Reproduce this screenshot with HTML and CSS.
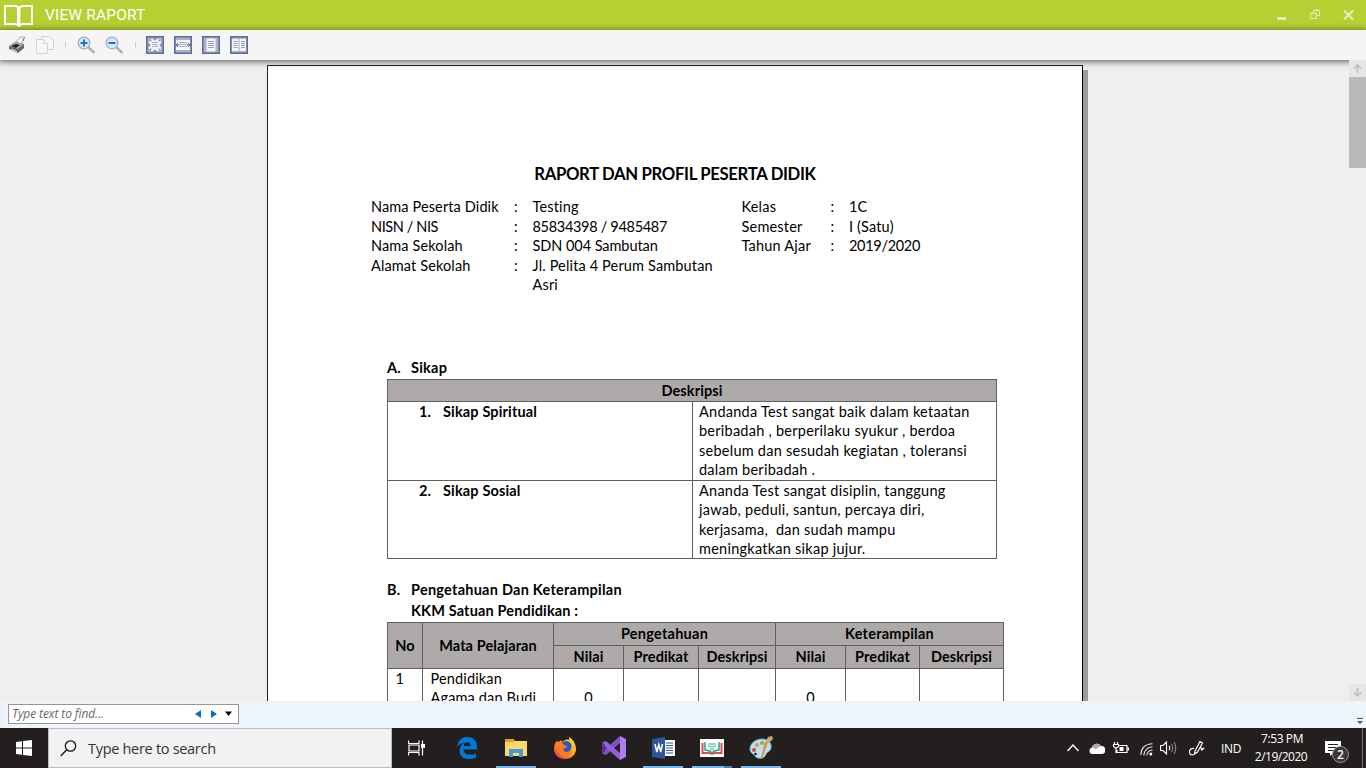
FILE: index.html
```html
<!DOCTYPE html>
<html lang="id">
<head>
<meta charset="utf-8">
<title>View Raport</title>
<link rel="stylesheet" href="styles.css">
</head>
<body>
<header class="titlebar">
  <svg class="book" width="30" height="24" viewBox="0 0 30 24" fill="none" stroke="#fff" stroke-width="2"><path d="M1 2H11Q13 2 15 4Q17 2 19 2H28V20H19Q17 20 15 22Q13 20 11 20H1Z"/><path d="M14.7 4V21" stroke-width="3.4"/></svg>
  <h1>VIEW RAPORT</h1>
  <div class="winbtns">
    <svg width="11" height="12" viewBox="0 0 11 12"><path d="M1 8h9v3H1z" fill="#e3edb4"/></svg>
    <svg width="11" height="12" viewBox="0 0 11 12" fill="none" stroke="#e3edb4"><path d="M.5 4.500h6v5h-6zM.5 4h6M3.500 3V1.500h6v5H7M3.500 1h6"/></svg>
    <svg width="11" height="12" viewBox="0 0 11 12" stroke="#e3edb4" stroke-width="2.400"><path d="M1 1.500l9 9M10 1.500l-9 9"/></svg>
  </div>
</header>

<nav class="toolbar">
  <svg width="18" height="18" viewBox="0 0 18 18"><path d="M8 6L12 1l5 0-4 7z" fill="#f8f8f8" stroke="#999" stroke-width=".8"/><path d="M1 10L7 6l9 2v4l-6 5-9-4z" fill="#666"/><path d="M1 10L7 6l9 2-6 5z" fill="#aaa"/><path d="M3 10l5-2 4 1-4 3z" fill="#222"/><path d="M3 13l6 2.500" stroke="#eee"/><path d="M15 5l1-3" stroke="#777"/></svg>
  <svg class="copy" width="20" height="18" viewBox="0 0 20 18" fill="#f7f7f7" stroke="#d2d2d2"><path d="M6.500.5h8l4 4v9h-12z"/><path d="M1.500 3.500h7l4 4v10h-11z"/><path d="M8.500 3.500v4h4"/></svg>
  <i class="sep sep-a"></i>
  <svg class="zoom-in" width="19" height="19" viewBox="0 0 19 19"><path d="M11 11l6.500 6" stroke="#b0b0b0" stroke-width="2.600"/><circle cx="7" cy="7" r="5.800" fill="#d6eafc" stroke="#9badc2" stroke-width="1.300"/><path d="M3.500 7h7M7 3.500v7" stroke="#1f73d2" stroke-width="2"/></svg>
  <svg class="zoom-out" width="19" height="19" viewBox="0 0 19 19"><path d="M11 11l6.500 6" stroke="#b0b0b0" stroke-width="2.600"/><circle cx="7" cy="7" r="5.800" fill="#d6eafc" stroke="#9badc2" stroke-width="1.300"/><path d="M3.500 7h7" stroke="#1f73d2" stroke-width="2"/></svg>
  <i class="sep sep-b"></i>
  <svg class="fit" width="18" height="18" viewBox="0 0 18 18"><path d="M.75.75h16.500v16.500H.75z" fill="#a9b1c4" stroke="#5a6c97" stroke-width="1.500"/><path d="M5 3h8v12H5z" fill="#f5f5f7"/><path d="M3 5h12v8H3z" fill="#f5f5f7"/><path d="M6 6.500h6M6 8.500h6M6 10.500h6" stroke="#a9b1c4"/><path d="M9 2v2.500M9 13.500v2.500M2 9h2.500M13.500 9H16M4 4l1.500 1.500M14 4l-1.500 1.500M4 14l1.500-1.500M14 14l-1.500-1.500M7.500 3.500L9 2l1.500 1.500M7.500 14.500L9 16l1.500-1.500M3.500 7.500L2 9l1.500 1.500M14.500 7.500L16 9l-1.500 1.500" fill="none" stroke="#6476a0"/></svg>
  <svg class="fit" width="18" height="18" viewBox="0 0 18 18"><path d="M.75.75h16.500v16.500H.75z" fill="#a9b1c4" stroke="#5a6c97" stroke-width="1.500"/><path d="M2 4h14v10H2z" fill="#f5f5f7"/><path d="M5 6.500h8M5 8.500h8M5 10.500h8" stroke="#a9b1c4"/><path d="M1.500 9H5M13 9h3.500M4 7L2 9l2 2M14 7l2 2-2 2" fill="none" stroke="#526695"/></svg>
  <svg class="fit" width="18" height="18" viewBox="0 0 18 18"><path d="M.75.75h16.500v16.500H.75z" fill="#a9b1c4" stroke="#5a6c97" stroke-width="1.500"/><path d="M4.500 2.500h9v13h-9z" fill="#f5f5f7"/><path d="M6 5.500h6M6 7.500h6M6 9.500h6M6 11.500h6" stroke="#9aa4ba"/></svg>
  <svg class="fit" width="18" height="18" viewBox="0 0 18 18"><path d="M.75.75h16.500v16.500H.75z" fill="#a9b1c4" stroke="#5a6c97" stroke-width="1.500"/><path d="M2 3h6.500v12H2zM9.500 3H16v12H9.500z" fill="#f5f5f7"/><path d="M3.500 5.500h4M3.500 7.500h4M3.500 9.500h4M3.500 11.500h4M11 5.500h4M11 7.500h4M11 9.500h4M11 11.500h4" stroke="#9aa4ba"/></svg>
</nav>

<main class="viewer">
  <article class="page">
    <h2>RAPORT DAN PROFIL PESERTA DIDIK</h2>
    <section class="identity">
      <dl>
        <dt>Nama Peserta Didik</dt><dd>:</dd><dd>Testing</dd>
        <dt class="caps">NISN / NIS</dt><dd>:</dd><dd class="num">85834398 / 9485487</dd>
        <dt>Nama Sekolah</dt><dd>:</dd><dd class="mixed">SDN 004 Sambutan</dd>
        <dt>Alamat Sekolah</dt><dd>:</dd><dd>Jl. Pelita 4 Perum Sambutan<br>Asri</dd>
      </dl>
      <dl class="right">
        <dt>Kelas</dt><dd>:</dd><dd>1C</dd>
        <dt>Semester</dt><dd>:</dd><dd>I (Satu)</dd>
        <dt>Tahun Ajar</dt><dd>:</dd><dd class="num">2019/2020</dd>
      </dl>
    </section>
    <h3 class="sec-a"><span>A.</span>Sikap</h3>
    <div class="attitude">
      <div class="head wide">Deskripsi</div>
      <div class="aspect"><span>1.</span>Sikap Spiritual</div>
      <div class="desc">Andanda Test sangat baik dalam ketaatan<br>beribadah , berperilaku syukur , berdoa<br>sebelum dan sesudah kegiatan , toleransi<br>dalam beribadah .</div>
      <div class="aspect"><span>2.</span>Sikap Sosial</div>
      <div class="desc">Ananda Test sangat disiplin, tanggung<br>jawab, peduli, santun, percaya diri,<br>kerjasama,&nbsp; dan sudah mampu<br>meningkatkan sikap jujur.</div>
    </div>
    <h3 class="sec-b"><span>B.</span>Pengetahuan Dan Keterampilan</h3>
    <h3 class="kkm">KKM Satuan Pendidikan :</h3>
    <div class="scores">
      <div class="head tall">No</div><div class="head tall">Mata Pelajaran</div>
      <div class="head group">Pengetahuan</div><div class="head group">Keterampilan</div>
      <div class="head">Nilai</div><div class="head">Predikat</div><div class="head">Deskripsi</div>
      <div class="head">Nilai</div><div class="head">Predikat</div><div class="head">Deskripsi</div>
      <div class="cell">1</div><div class="cell">Pendidikan<br>Agama dan Budi</div>
      <div class="cell mark">0</div><div class="cell"></div><div class="cell"></div>
      <div class="cell mark">0</div><div class="cell"></div><div class="cell"></div>
    </div>
  </article>
  <div class="scrollbar">
    <div class="arrow"><svg width="9" height="9" viewBox="0 0 9 9" fill="none" stroke="#bbb" stroke-width="1.600"><path d="M4.500 9V1.500M1 4.500l3.500-3.500L8 4.500"/></svg></div>
    <div class="thumb"></div>
    <div class="arrow down"><svg width="9" height="9" viewBox="0 0 9 9" fill="none" stroke="#bbb" stroke-width="1.600"><path d="M4.500 0v7.500M1 4.500L4.500 8 8 4.500"/></svg></div>
  </div>
</main>

<div class="findbar">
  <div class="findbox"><span>Type text to find...</span>
    <svg width="38" height="10" viewBox="0 0 38 10"><path d="M6 1v8L0 5z" fill="#0b6cc4"/><path d="M16 1v8l6-4z" fill="#0b6cc4"/><path d="M30 2.500h7L33.500 7z"/></svg>
  </div>
  <svg class="more" width="6" height="7" viewBox="0 0 6 7" fill="#555"><path d="M0 0h6v1H0zM0 3h6L3 6z"/></svg>
</div>

<footer class="taskbar">
  <div class="start"><svg width="16" height="16" viewBox="0 0 16 16" fill="#fff"><path d="M0 2l6-.8v6.300H0zM7 1l9-1v7.500H7zM0 8.500h6v6.300L0 14zM7 8.500h9V16l-9-1z"/></svg></div>
  <div class="search"><svg width="17" height="17" viewBox="0 0 17 17" fill="none" stroke="#111" stroke-width="1.300"><circle cx="10.500" cy="6" r="5.200"/><path d="M6.800 9.800L.7 16"/></svg><span>Type here to search</span></div>
  <div class="apps">
    <div class="app taskview"><svg width="17" height="16" viewBox="0 0 17 16" fill="none" stroke="#fff" stroke-width="1.200"><path d="M.5.500V3.500H11V.5M.5 15.500V12.500H11V15.500M1 5h10v6H1zM14.500.500V15.500"/><path d="M13 4h4v4h-4z" fill="#fff" stroke="none"/></svg></div>
    <div class="app"><svg width="20" height="22" viewBox="0 0 20 22"><path d="M0 10C1 3 5 0 10.500 0C17 0 20 4.500 20 10v2.500H6.500c.3 4 3.500 5.300 6.500 5.300 2.500 0 4.500-.7 6-1.600v4.300C17 21.500 14.500 22 12 22 6 22 2.500 18.500 2.500 13.500 2.500 10 4.500 7.500 7.500 6 4.500 6 1.500 7.500 0 10zM6.700 9h7c0-2.300-1.200-3.700-3.500-3.700S7 7 6.700 9z" fill="#0078d7"/></svg></div>
    <div class="app open"><svg width="22" height="18" viewBox="0 0 22 18"><path d="M0 0h8l2 2h12v15H0z" fill="#ffd665"/><path d="M0 0h9v3H0z" fill="#e0a11b"/><path d="M4 18v-8h14v8h-4v-4H8v4z" fill="#3f9bdc"/></svg></div>
    <div class="app"><svg width="22" height="22" viewBox="0 0 22 22"><defs><linearGradient id="fx" x1="1" y1="0" x2="0" y2="1"><stop offset="0" stop-color="#ffe94a"/><stop offset=".5" stop-color="#ff9a1a"/><stop offset="1" stop-color="#f0216b"/></linearGradient></defs><path d="M3 4l2 1 2-2 1 2c2-2 5-3 7-2V0c5 3 7 8 7 12 0 6-5 10-11 10S0 18 0 12C0 8 1 6 3 4z" fill="url(#fx)"/><circle cx="12" cy="9.500" r="5.500" fill="#2856c8"/><path d="M3 6c4-2 6 0 7 2l3 1c0 2-3 2-4 3 1 4 6 4 9 1-1 5-5 7-8 6-6-1-9-7-7-13z" fill="#ff7c1e"/></svg></div>
    <div class="app"><svg width="24" height="24" viewBox="0 0 24 24"><path d="M18 0l6 3v18l-6 3V0z" fill="#b07cf0"/><path d="M18 0v7L4 19 0 17.500V16z" fill="#8250c8"/><path d="M0 8V6.500L4 5l14 12v7z" fill="#9460da"/><path d="M0 6.500v11l3-2V8.500z" fill="#60309c"/></svg></div>
    <div class="app open"><svg width="23" height="22" viewBox="0 0 23 22"><path d="M12 3h11v16H12z" fill="#fff"/><path d="M14 6h7M14 8.500h7M14 11h7M14 13.500h7M14 16h7" stroke="#2b5797"/><path d="M0 2L13 0v22L0 20z" fill="#2b579a"/><path d="M3 7l1.800 8 2-7.500L8.700 15 10.500 7" fill="none" stroke="#fff" stroke-width="1.500"/></svg></div>
    <div class="app open double"><svg width="24" height="18" viewBox="0 0 24 18" fill="none"><path d="M0 0h24v18H0z" fill="#fff"/><path d="M2.500 4v10h6q2 0 3.500 1 1.500-1 3.500-1h6V4" stroke="#e04a50" stroke-width="2"/><path d="M5 3v8q4 0 7 3 3-3 7-3V3" stroke="#25a878" stroke-width="1.500"/><path d="M8 5h8M8 7.500h8M10 10h4" stroke="#72c8a8" stroke-width="1.300"/></svg></div>
    <div class="app open"><svg width="24" height="24" viewBox="0 0 24 24"><path d="M1 13C1 7 7 3 13 3c6 0 10 4 9 9-1 4-4 4-5 6-1 3-3 5-8 4-3-.5-3-3-5-4-2-1-3-3-3-5z" fill="#b9e0f0" stroke="#70adc9"/><circle cx="5" cy="14" r="2" fill="#d94738"/><circle cx="8" cy="9" r="2" fill="#f0903a"/><circle cx="13" cy="7" r="2" fill="#7dbd3a"/><circle cx="6.500" cy="18" r="1.300" fill="#231f1e"/><path d="M19 6l-6 17-1-1 4-16z" fill="#e68b2c"/><path d="M17 5l2-4 4-1 1 3-4 4z" fill="#c8a679"/></svg></div>
  </div>
  <div class="tray">
    <svg class="t-up" width="12" height="8" viewBox="0 0 12 8" fill="none" stroke="#fff" stroke-width="1.300"><path d="M.5 7L6 1l5.500 6"/></svg>
    <svg class="t-cloud" width="16" height="11" viewBox="0 0 16 11"><path d="M3.500 11A3.300 3.300 0 013 4.500 5 5 0 0112 3a4 4 0 01.8 8z" fill="#fff"/><path d="M3 4.500A5 5 0 0112 3L7 6z" fill="#aaa"/></svg>
    <svg class="t-bat" width="16" height="13" viewBox="0 0 16 13" fill="none" stroke="#fff" stroke-width="1.200"><path d="M6 3.500h8v7H4V8M15.400 5.500v3M1.500 0v2M4.500 0v2M.5 2.500h5v2L3 6.500.5 4.500zM3 6v4.500h2"/><path d="M6.500 5h4v4h-4z" fill="#fff" stroke="none"/></svg>
    <svg class="t-wifi" width="13" height="13" viewBox="0 0 13 13" fill="none" stroke="#ddd" stroke-width="1.100"><path d="M.8 12C1 5 5.500 1 12.500.7M3.800 12.500C4 7.500 7.500 4 12.500 3.800M6.800 12.500C7 9.500 9 7.200 12.500 7"/><circle cx="10.800" cy="11" r="1.500" fill="#fff" stroke="none"/></svg>
    <svg class="t-vol" width="17" height="14" viewBox="0 0 17 14" fill="none" stroke="#fff" stroke-width="1.100"><path d="M.6 4.500H3L6.500 1v12L3 9.500H.6zM9 4.800q1.500 2.200 0 4.400"/><path d="M11.500 3q2.500 4 0 8M14 1q3.500 6 0 12" stroke="#888"/></svg>
    <svg class="t-pen" width="16" height="16" viewBox="0 0 16 16" fill="none" stroke="#fff" stroke-width="1.200"><path d="M6 11L11 1.500 13.500 3 8.500 12 5.500 14zM5 8.500C2 8 .5 10 .5 12s1 3 2.500 3 3-1 3-2M9.500 10c2-3 4-3 3 0 1 0 2-2 3-2"/></svg>
    <span class="lang">IND</span>
    <div class="clock"><span class="time">7:53 PM</span><span class="date">2/19/2020</span></div>
    <div class="note"><svg width="17" height="15" viewBox="0 0 17 15"><path d="M0 0h16v12H9l-4 3v-3H0z" fill="#fff"/><path d="M3 3.500h10M3 6.500h10M3 9.500h6" stroke="#222"/></svg><b>2</b></div>
    <i class="peek"></i>
  </div>
</footer>
</body>
</html>
```
FILE: styles.css
```css
* { box-sizing: border-box; }
body { margin: 0; width: 1366px; height: 768px; overflow: hidden; display: flex; flex-direction: column; background: #efefef; }
svg { display: block; flex: none; }
h1, h2, h3, dl, dt, dd { margin: 0; }

.titlebar { height: 30px; flex: none; background: #b6d033; display: flex; align-items: center; padding: 0 12px 0 4px; }
.book { margin-top: 1px; }
.titlebar h1 { margin-left: 11px; font: 400 15.5px/30px Roboto, sans-serif; letter-spacing: .15px; color: #fff; }
.winbtns { margin-left: auto; display: flex; gap: 22.5px; }

.toolbar { height: 30px; flex: none; background: #f5f5f5; display: flex; align-items: center; padding-left: 8px; position: relative; z-index: 2; box-shadow: 0 1px 6px 1px rgba(0,0,0,.55); }
.copy { margin-left: 9px; }
.sep { width: 1px; height: 6px; background: #ccc; }
.sep-a { margin-left: 10px; }
.zoom-in { margin-left: 11px; }
.zoom-out { margin-left: 9px; }
.sep-b { margin-left: 11px; }
.fit { margin-left: 10px; }

.viewer { height: 641px; flex: none; overflow: hidden; display: flex; justify-content: space-between; padding-left: 267px; background: #efefef; }
.page { width: 816px; height: 1100px; flex: none; margin-top: 5px; border: 1px solid #222; border-right-color: #000; background: #fff; box-shadow: 5px 5px 0 #9b9b9b; padding: 97px 0 0 103px; font: 14.5px/19.45px Lato, "Liberation Sans", sans-serif; letter-spacing: .15px; color: #000; }
.page h2 { width: 608px; text-align: center; font-size: 16.7px; line-height: 22px; font-weight: 700; letter-spacing: -.33px; }
.identity { display: flex; margin-top: 12.4px; height: 98px; }
.identity dl { display: grid; grid-template-columns: 143px 18.500px 209px; align-content: start; }
.identity .right { grid-template-columns: 89px 18.500px 120px; }
.identity dt { letter-spacing: .12px; }
.identity .right dt { letter-spacing: .2px; }
.identity .num { letter-spacing: -.31px; }
.identity .mixed { letter-spacing: -.06px; }
.identity .caps { letter-spacing: -.4px; }
.page h3 { font-size: 14.5px; font-weight: 700; line-height: 20px; display: flex; padding-left: 16px; letter-spacing: .25px; }
.page h3 span { width: 24px; }
.page .sec-a { margin-top: 62.600px; }
.page .sec-b { margin-top: 21px; }
.page .kkm { padding-left: 40px; margin-top: 1px; letter-spacing: .15px; }

.attitude, .scores { display: grid; gap: 1px; padding: 1px; background: #606060; margin-left: 16px; width: max-content; }
.attitude { grid-template-columns: 304px 303px; grid-template-rows: 21px 78px 77px; margin-top: 1px; }
.attitude > div, .scores > div { background: #fff; overflow: hidden; }
.attitude > .head, .scores > .head { background: #aeaaaa; font-weight: 700; display: flex; align-items: center; justify-content: center; white-space: nowrap; letter-spacing: .1px; }
.attitude .wide { grid-column: span 2; }
.aspect { font-weight: 700; display: flex; padding-left: 31px; }
.aspect span { width: 24px; }
.desc { padding-left: 6px; white-space: nowrap; letter-spacing: .25px; }

.scores { grid-template-columns: 34px 130px 69px 74px 76px 69px 73px 83px; grid-template-rows: 22px 22px 78px; margin-top: 1px; }
.scores .tall { grid-row: span 2; }
.scores .group { grid-column: span 3; letter-spacing: .25px; }
.scores .cell { padding-left: 7.500px; white-space: nowrap; }
.scores .mark { padding: 19px 0 0; text-align: center; }

.scrollbar { width: 17px; display: flex; flex-direction: column; position: relative; z-index: 3; background: #efefef; }
.arrow { height: 17px; background: #e6e6e6; display: grid; place-items: center; }
.arrow.down { margin-top: auto; }
.thumb { height: 91px; background: #bababa; }

.findbar { height: 27px; flex: none; background: #edf4fd; border-top: 1px solid #f0f0f0; border-left: 3px solid #efefef; display: flex; justify-content: space-between; align-items: center; padding: 0 3px 0 5px; }
.findbox { width: 231px; height: 20px; margin-bottom: 2px; border: 1px solid #969696; background: #fff; display: flex; align-items: center; justify-content: space-between; padding: 0 5px 0 3px; font: italic 12px/18px "Open Sans", "Noto Sans", sans-serif; letter-spacing: -.1px; color: #666; }
.more { margin-top: 12px; }

.taskbar { height: 40px; flex: none; background: #231f1e; display: flex; color: #fff; font-family: "Open Sans", "Noto Sans", sans-serif; }
.start { width: 48px; display: grid; place-items: center; }
.search { width: 344px; background: #f2f2f2; border: 1px solid #bdbdbd; display: flex; align-items: center; gap: 11px; padding-left: 11px; color: #333; font-size: 14.500px; letter-spacing: -.3px; }
.apps { display: flex; gap: 9px; margin-left: 4px; }
.app { width: 40px; display: grid; place-items: center; border-bottom: 2px solid transparent; padding-top: 1px; }
.taskview { margin-right: 2px; }
.app.open { border-bottom-color: #76b9ed; }
.app.double { border-image: linear-gradient(90deg, #76b9ed 77%, #527fa5 77%) 2; border-top: 0; }
.tray { margin-left: auto; display: flex; align-items: center; }
.t-cloud { margin-left: 10px; }
.t-bat { margin-left: 8px; }
.t-wifi { margin-left: 11px; margin-top: 3px; }
.t-vol { margin-left: 7px; }
.t-pen { margin-left: 12px; }
.lang { width: 20px; margin-left: 16px; font-size: 12px; letter-spacing: -.3px; }
.clock { width: 54px; margin-left: 13px; display: flex; flex-direction: column; align-items: center; font-size: 12px; line-height: 18px; letter-spacing: -.5px; white-space: nowrap; }
.time { padding-left: 2px; letter-spacing: -.4px; }
.note { position: relative; width: 25px; margin-left: 17px; }
.note b { position: absolute; left: 7px; top: 5px; width: 17px; height: 17px; border-radius: 50%; background: #3a3838; border: 1px solid #999; font: 600 12px/15px "Open Sans", sans-serif; text-align: center; }
.peek { width: 1px; height: 40px; background: #777; margin-left: 12px; margin-right: 3px; }
```
